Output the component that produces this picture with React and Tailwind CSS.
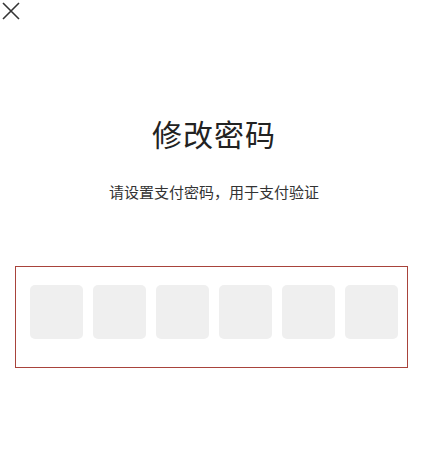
import React from "react";

const App = () => {
  const cells = [0, 1, 2, 3, 4, 5];
  return (
    <div
      className="w-[428px] h-[464px] bg-white relative"
      style={{ fontFamily: '"Noto Sans CJK SC", "Noto Sans", sans-serif' }}
    >
      <button className="absolute left-[2px] top-[2px] w-[18px] h-[18px] flex items-center justify-center">
        <svg width="18" height="18" viewBox="0 0 18 18" fill="none" stroke="#333" strokeWidth="1.6">
          <path d="M1 1L17 17M17 1L1 17" />
        </svg>
      </button>

      <div className="pt-[111px] flex flex-col items-center">
        <h1 className="text-[30px] leading-[44px] text-[#222] font-normal tracking-[1px]">修改密码</h1>
        <p className="mt-[26px] text-[15px] leading-[22px] text-[#333]">请设置支付密码，用于支付验证</p>
      </div>

      <div className="mt-[63px] ml-[15px] w-[393px] h-[102px] border border-[#a8433b] flex items-start pt-[18px] pl-[14px] gap-[10px]">
        {cells.map((i) => (
          <div key={i} className="w-[53px] h-[54px] rounded-[5px] bg-[#efefef]" />
        ))}
      </div>
    </div>
  );
};

export default App;
